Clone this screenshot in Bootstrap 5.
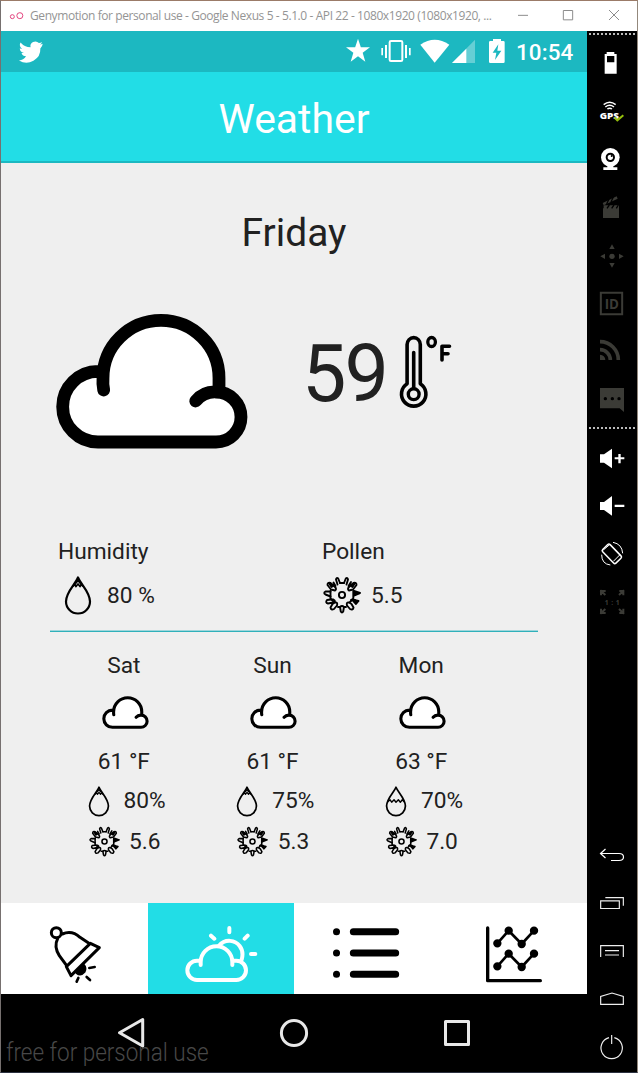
<!DOCTYPE html>
<html lang="en">
<head>
<meta charset="utf-8">
<meta name="viewport" content="width=device-width, initial-scale=1">
<title>Weather</title>
<link href="https://cdn.jsdelivr.net/npm/bootstrap@5.3.0/dist/css/bootstrap.min.css" rel="stylesheet">
<style>
body{width:638px;height:1073px;overflow:hidden;background:#fff;font-family:Roboto,sans-serif;color:#212121;font-size:22.7px;line-height:34px}
svg{display:block;flex:none}
symbol{overflow:visible}
.emu-window{width:638px;height:1073px;border:1px solid;border-color:#9b7b68 #93887c #2b3140 #76706f}
.title-bar{height:30px;background:#fff;padding-left:8px}
.title-text{font:12px/30px "Open Sans",sans-serif;color:#949494;margin-left:6px;width:478px;flex:none;white-space:nowrap;letter-spacing:-.41px}
.phone{width:586px}
.status-bar{height:41px;background:#1cb8c1;color:#fff}
.clock{font-size:22.4px;font-weight:500;line-height:41px;padding-top:1px;width:71px;letter-spacing:.1px}
.app-bar{height:91px;background:#22dde6;border-bottom:2px solid #1cb8c1;color:#fff;font-size:40.9px;line-height:89px;padding-top:3px}
.forecast-page{height:740px;background:#efefef}
.today{height:139px;font-size:38.9px;line-height:139px}
.current{height:147px;padding-left:55px}
.temp-now{font-size:79px;line-height:145px;width:95px;margin-left:54px;letter-spacing:-2px;white-space:nowrap;transform-origin:left}
.thermo{margin:30px 0 0 1px}
.details{margin-top:86px;height:96px;padding-left:57px}
.detail-col{width:264px}
.value-row{height:54px}
.rule{height:2px;width:488px;margin-left:49px;margin-top:-1px;background:linear-gradient(#9fd6db 50%,#2fb0ba 50%)}
.days{padding:17px 0 0 48.500px}
.day{width:148.7px}
.tab-item{width:146.5px;height:91px;background:#fff}
.tab-item.active{background:#22dde6}
.nav-keys{height:78px;background:#000}
.watermark{left:5px;top:38px;font-size:26px;font-weight:300;line-height:40px;color:#484848;transform:scaleX(.865);transform-origin:left;white-space:nowrap}
.tool-rail{width:50px;background:#000}
.dots{height:2px;margin:0 2px;background:repeating-linear-gradient(90deg,#bbb 0 2px,transparent 2px 4px)}
.ink{fill:none;stroke:#000;stroke-linecap:round;stroke-linejoin:round}
</style>
</head>
<body>
<svg width="0" height="0" class="position-absolute">
<defs>
<symbol id="cloud" viewBox="56 313 192 136">
<path fill="#fff" d="M98 442A35.3 35.3 0 0 1 98 371.3H103.4A58 58 0 0 1 219 378V392A25 25 0 0 1 216 442Z"/>
<path class="ink" stroke-width="12.8" d="M103.7 390Q102.5 384 103 378A58 57.7 0 0 1 219 378V388M195.7 401A25 25 0 0 1 216 392A25 25 0 0 1 216 442H98A35.3 35.3 0 0 1 98 371.3H101"/>
</symbol>
<symbol id="drop" viewBox="0 0 28 40"><path class="ink" stroke-width="2.2" d="M14 2.5C16.500 9 26 17 26 26.500A12 12 0 0 1 2 26.500C2 17 11.500 9 14 2.500Z"/></symbol>
<symbol id="drop-full" viewBox="0 0 28 40"><use href="#drop" width="28" height="40"/><path class="ink" stroke-width="1.7" d="M9.500 11L11 9.500 12 11.500 14 9 16 11.500 17 9.500 18.500 11M12 8L14 5.500 16 8M14 3V6"/></symbol>
<symbol id="drop-half" viewBox="0 0 28 40"><use href="#drop" width="28" height="40"/><path class="ink" stroke-width="1.8" d="M4 20.500L6.500 18.500 8.500 21.500 11.500 18.500 14 21.500 17 18.500 19.500 21.500 22 18.500 24 20.500"/></symbol>
<symbol id="pollen" viewBox="-19 -19 38 38">
<g class="ink" stroke-width="1.9">
<circle r="3.1"/>
<path d="M-2-12H2M-11.500-4V4M11.300-4V4M-4 12H-2M2 12H4M8 7L11 4M-8 7L-11 4"/>
<path d="M-2-12L-3.800-16.500Q-5.500-18-6-15.500L-4.500-10.500M2-12L3.800-16.500Q5.500-18 6-15.500L4.500-10.500M-2 12Q0 10 2 12L1.200 16.500Q0 18.500-1.200 16.500ZM-11.500-3.500L-16.500-3.500Q-19-2-16.500-.5L-11.500 1.500M-11 4.500L-15 5Q-17 7.500-14 8.500L-9 7.500Q-5.500 6-8.500 4.500ZM-9.500 9L-11.500 12.500Q-11 15.500-8 14L-5 10.500Q-4 7-7 7.500ZM9.500 9L11.500 12.500Q11 15.500 8 14L5 10.500Q4 7 7 7.500ZM-7-4.500Q-5-6-7-8L-11.500-12Q-14.500-13-14.500-10L-11-5.500ZM7-4.500Q5-6 7-8L11.500-12Q14.500-13 14.500-10L11-5.500ZM-6.500-9L-8.500-12.500M6.500-9L9-13M9 5L13 5"/>
<path fill="#000" d="M12-4L18-2 12 0.500ZM10 4.500L16.500 6 14 9ZM-8.500-9.500L-13-12-10.500-8ZM8.500-9.500L13-12 10.500-8Z"/>
</g>
</symbol>
</defs>
</svg>

<div class="emu-window">
<header class="title-bar d-flex align-items-center">
<svg width="15" height="14" viewBox="28 24 45 42" fill="none" stroke="#e4457f" stroke-width="3"><circle cx="38" cy="47" r="6"/><circle cx="60.500" cy="44" r="9"/></svg>
<div class="title-text">Genymotion for personal use - Google Nexus 5 - 5.1.0 - API 22 - 1080x1920 (1080x1920, ...</div>
<svg width="120" height="30" viewBox="570 3 360 90" fill="none" stroke="#8c8c8c" stroke-width="3"><path d="M600 46H630M736 31.500H764V59.500H736ZM873 30L903 60M903 30L873 60"/></svg>
</header>

<div class="d-flex">
<main class="phone">
<div class="status-bar d-flex justify-content-between">
<svg width="60" height="41" viewBox="3 93 180 123"><g transform="translate(57 120) scale(3.02 2.9)"><path fill="#fff" d="M23.6 2.900a9.600 9.600 0 0 1-2.800.8 4.800 4.800 0 0 0 2.100-2.700 9.600 9.600 0 0 1-3.100 1.200 4.850 4.850 0 0 0-8.300 4.400A13.800 13.800 0 0 1 1.500 1.600a4.850 4.850 0 0 0 1.500 6.500 4.800 4.800 0 0 1-2.200-.6 4.850 4.850 0 0 0 3.900 4.800 4.900 4.900 0 0 1-2.200.1 4.850 4.850 0 0 0 4.500 3.400A9.700 9.700 0 0 1 0 20.200 13.800 13.800 0 0 0 21.200 7.900a9.900 9.900 0 0 0 2.400-5Z" transform="translate(0 1)"/></g></svg>
<div class="d-flex">
<svg width="174" height="41" viewBox="72 93 522 123" fill="#fff">
<path d="M120 116L128.500 142H156L134 158.500 142 185 120 169 98 185 106 158.500 84 142H111.500Z"/>
<rect x="215" y="123" width="38" height="60" rx="4" fill="none" stroke="#fff" stroke-width="6"/>
<path d="M190 144h5v22h-5zM201 135h6v39h-6zM261 135h6v39h-6zM273 144h5v22h-5z"/>
<path d="M307 134Q350 104 394 134L350 188Z"/>
<path opacity=".32" d="M471 119V189H402Z"/><path d="M445 146V189H402Z"/>
<path fill-rule="evenodd" d="M525 117H549V123H556Q560 123 560 127V185Q560 189 556 189H517Q513 189 513 185V127Q513 123 517 123H525ZM541 133L524 158H535L531 180 550 152H538Z"/>
</svg>
<div class="clock">10:54</div>
</div>
</div>
<h1 class="app-bar m-0 text-center fw-normal">Weather</h1>

<section class="forecast-page">
<div class="today text-center">Friday</div>
<div class="current d-flex">
<svg width="192" height="136" class="align-self-end"><use href="#cloud"/></svg>
<div class="temp-now">59</div>
<svg class="thermo" width="56" height="80" viewBox="398 332 56 80"><path class="ink" stroke-width="3.600" d="M407.100 383.700V344.500A6.600 6.900 0 0 1 420.300 344.500V383.700A12.200 12.200 0 1 1 407.100 383.700ZM413.700 352.500V388M442 360V346.300H449.500M442 353.700H448"/><circle class="ink" cx="413.700" cy="394.200" r="5.400" stroke-width="3.400"/><ellipse class="ink" cx="431.600" cy="342" rx="3.800" ry="4.500" stroke-width="3.300"/></svg>
</div>
<div class="details d-flex">
<div class="detail-col"><div>Humidity</div><div class="value-row d-flex align-items-center"><svg width="28" height="40" style="margin-left:6px;margin-top:-3px"><use href="#drop-full"/></svg><span style="margin-left:15px">80 %</span></div></div>
<div class="detail-col"><div>Pollen</div><div class="value-row d-flex align-items-center"><svg width="38" height="38" style="margin-left:1px;margin-top:-3px"><use href="#pollen"/></svg><span style="margin-left:10px">5.5</span></div></div>
</div>
<div class="rule"></div>
<div class="days d-flex" id="days"></div>
</section>

<nav class="d-flex">
<div class="tab-item"><svg width="146" height="91" viewBox="3 24 438 273" class="ink"><g stroke-width="9"><circle cx="169" cy="113" r="15"/><path d="M187 117C210 107 226 114 240 127L269 146M173 131C163 150 168 166 178 182L200 212M271 145L298 158 213 242 199 215Z"/></g><path d="M229 234Q242 245 254 231Q261 218 250 207Z" fill="#000" stroke-width="5"/><path stroke-width="8" d="M268 219L284 216M260 246L270 255M235 249L230 260"/></svg></div>
<div class="tab-item active"><svg width="146" height="91" viewBox="443 24 438 273" class="ink" style="stroke:#fff"><path stroke-width="12" d="M601 210V201A47.500 47.500 0 0 1 696 201V210M601 197H590A28.500 28.500 0 0 0 590 255H708A28.500 28.500 0 0 0 708 197H699M655 153C676 129 705 136 718 153Q731 170 724 194M687 99V112M632 122L642 131M742 122L733 131M752 177H765"/></svg></div>
<div class="tab-item"><svg width="146" height="91" viewBox="12 24 438 273" class="ink"><path stroke-width="21" d="M190 110H317M190 174H317M190 238H317M139.500 110H139.600M139.500 174H139.600M139.500 238H139.600"/></svg></div>
<div class="tab-item"><svg width="146" height="91" viewBox="453 24 438 273" class="ink"><path stroke-width="10" d="M593 99V257H751"/><path stroke-width="8" d="M622 145L656 107 695 147 732 107M622 214L656 176 695 216 732 176"/><path stroke-width="25" d="M622 145h.1M656 107h.1M695 147h.1M732 107h.1M622 214h.1M656 176h.1M695 216h.1M732 176h.1"/></svg></div>
</nav>

<footer class="nav-keys position-relative">
<svg width="586" height="78" viewBox="1 994 586 78" fill="none" stroke="#e8e8e8" stroke-width="3" stroke-linejoin="round"><path d="M119.500 1032.700L142.700 1019.500V1046ZM445.500 1021.500H468.500V1044.500H445.500Z"/><circle cx="294" cy="1033" r="12.600"/></svg>
<div class="watermark position-absolute">free for personal use</div>
</footer>
</main>

<aside class="tool-rail">
<div class="dots" style="margin-top:2px"></div>
<div style="padding-top:3px">
<svg width="50" height="48" viewBox="6 30 150 144"><path fill="#fff" fill-rule="evenodd" d="M65 72H88V78H95V137H59V78H65ZM66 84V103H88V84Z"/></svg>
<svg width="50" height="48" viewBox="6 174 150 144"><path fill="none" stroke="#fff" stroke-width="4.500" d="M56 230Q74 216 92 230M61 237Q74 227 87 237M67 243Q74 238 81 243"/><text x="44" y="272" font-family="Open Sans" font-weight="800" font-size="25" fill="#fff" textLength="58" lengthAdjust="spacingAndGlyphs">GPS</text><path fill="none" stroke="#95bf0c" stroke-width="6" d="M88 268L97 277 115 262"/></svg>
<svg width="50" height="48" viewBox="6 318 150 144"><circle cx="76" cy="388" r="28" fill="#fff"/><circle cx="76" cy="388" r="11" fill="none" stroke="#000" stroke-width="6"/><path fill="#fff" d="M67 412H85V418H97V426H55V418H67Z"/><circle cx="80" cy="384" r="3"/></svg>
<svg width="50" height="48" viewBox="6 462 150 144" fill="#3b3b36"><path d="M54 541H102V570H54ZM53 525L95 505 98 512 56 532ZM56 532H102V542H56Z"/><path stroke="#000" stroke-width="4" d="M65 528L72 513M78 522L85 507M66 541L73 531M80 541L87 531M94 541L100 531"/></svg>
<svg width="50" height="48" viewBox="6 6 150 144" fill="#3b3b36"><circle cx="81" cy="85" r="8"/><path d="M73 63L81 49 89 63ZM73 105L81 119 89 105ZM60 77L46 85 60 93ZM102 77L116 85 102 93Z"/></svg>
<svg width="50" height="48" viewBox="6 150 150 144" fill="#3b3b36"><path fill="none" stroke="#3b3b36" stroke-width="6" d="M47.500 194.500H111.500V258.500H47.500Z"/><text x="59" y="243" font-family="Open Sans" font-weight="700" font-size="43" textLength="43" lengthAdjust="spacingAndGlyphs">ID</text></svg>
<svg width="50" height="48" viewBox="6 294 150 144" fill="none" stroke="#3b3b36"><path stroke-width="11" d="M45 341A55 55 0 0 1 100 396M45 365A31 31 0 0 1 76 396"/><path fill="#3b3b36" stroke="none" d="M45 380A16 16 0 0 1 61 396H45Z"/></svg>
<svg width="50" height="48" viewBox="6 438 150 144"><path fill="#3b3b36" d="M45 480H117V552L104 541H45Z"/><path stroke="#000" stroke-linecap="round" stroke-width="10" d="M61 512h.1M82 512h.1M102 512h.1"/></svg>
</div>
<div class="dots" style="margin-top:5px;margin-bottom:5px"></div>
<div>
<svg width="50" height="48" viewBox="6 42 150 144" fill="#fff"><path d="M45 103H57L81 86V145L57 128H45ZM89 112H100V102H107V112H118V118H107V130H100V118H89Z"/></svg>
<svg width="50" height="48" viewBox="6 186 150 144" fill="#fff"><path d="M45 246H57L81 228V287L57 270H45ZM89 254H118V261H89Z"/></svg>
<svg width="50" height="48" viewBox="6 330 150 144" fill="none" stroke="#fff"><rect x="65" y="373" width="31" height="57" rx="5" stroke-width="4.500" transform="rotate(-44 80.500 401.500)"/><path stroke-width="3" d="M50 404Q50 432 76 435M84 367Q111 372 113 400M55 390L75 373M85 424L105 404"/></svg>
<svg width="50" height="48" viewBox="6 474 150 144" fill="none" stroke="#3b3b36" stroke-width="6"><path d="M48 526V513H62M46 511L61 525M103 513H115V526M117 511L102 525M48 566V579H62M46 581L61 567M103 579H115V566M117 581L102 567"/><text x="59" y="554" font-family="Open Sans" font-size="20" font-weight="700" fill="#3b3b36" stroke="none" textLength="45">1:1</text></svg>
</div>
<div style="padding-top:205px">
<svg width="50" height="48" viewBox="587 831 50 48" fill="none" stroke="#fff" stroke-width="1.200"><path d="M605.500 849L600.500 853.500 605.500 858M600.500 853.500H619Q623.500 853.500 623.500 857T619 860.500H611"/></svg>
<svg width="50" height="48" viewBox="891 -48 150 144" fill="none" stroke="#eee" stroke-width="3.500"><path d="M932 17.500H988V40.500H932ZM946 8H1000V32"/></svg>
<svg width="50" height="48" viewBox="891 96 150 144" fill="none" stroke="#eee" stroke-width="3.500"><path d="M932 186V152H1000V186M945 167H987M945 180H987"/></svg>
<svg width="50" height="48" viewBox="891 240 150 144" fill="none" stroke="#eee" stroke-width="3.500"><path d="M932 328V304L966 294 1000 304V328Z"/></svg>
<svg width="50" height="48" viewBox="891 384 150 144" fill="none" stroke="#eee" stroke-width="3.500"><path d="M957 428A32 32 0 1 0 973 428M965 420V447"/></svg>
</div>
</aside>
</div>
</div>
<script src="https://cdn.jsdelivr.net/npm/bootstrap@5.3.0/dist/js/bootstrap.bundle.min.js"></script>
<script>
const days=[["Sat","61 °F","80%","5.6","drop-full"],["Sun","61 °F","75%","5.3","drop-full"],["Mon","63 °F","70%","7.0","drop-half"]];
document.getElementById("days").innerHTML=days.map(([name,temp,hum,pollen,drop])=>`
<div class="day">
<div class="text-center">${name}</div>
<div class="d-flex align-items-center" style="height:60px;padding:0 0 2px 52px"><svg width="47" height="33"><use href="#cloud"/></svg></div>
<div class="text-center" style="height:36px;line-height:38px">${temp}</div>
<div class="d-flex align-items-center" style="height:44px;padding-left:38px"><svg width="22" height="32"><use href="#${drop}"/></svg><span style="margin-left:14px">${hum}</span></div>
<div class="d-flex align-items-center" style="height:37px;padding-left:39px"><svg width="31" height="31" style="margin-top:-1px"><use href="#pollen"/></svg><span style="margin-left:9.500px">${pollen}</span></div>
</div>`).join("");
</script>
</body>
</html>
